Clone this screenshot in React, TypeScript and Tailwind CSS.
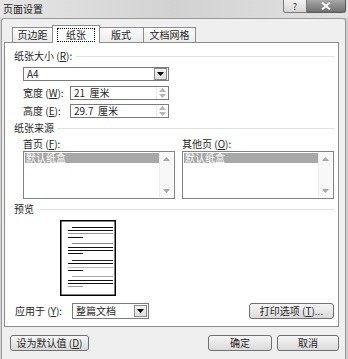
import React from "react";

const Tri = ({ up, className }: { up?: boolean; className?: string }) => (
  <svg width="7" height="4" viewBox="0 0 7 4" className={className}>
    <path d={up ? "M0 4L3.5 0L7 4Z" : "M0 0L7 0L3.5 4Z"} fill="currentColor" />
  </svg>
);

const Section = ({ children, className = "" }: { children: React.ReactNode; className?: string }) => (
  <div className={`flex items-center h-[10px] ${className}`}>
    <span className="whitespace-nowrap">{children}</span>
    <div className="flex-1 ml-[4px] h-px bg-[#e0e0e0]" />
  </div>
);

const Key = ({ k }: { k: string }) => (
  <>
    {" "}(<span className="underline underline-offset-1">{k}</span>)
  </>
);

const DropBtn = () => (
  <div className="w-[13px] h-[12px] mr-px border border-[#8a8a8a] bg-linear-to-b from-[#f4f4f4] to-[#dedede] flex items-center justify-center text-black">
    <Tri />
  </div>
);

const Spin = ({ label, k, value }: { label: string; k: string; value: string }) => (
  <div className="flex items-center ml-[9px] h-[14px]">
    <span className="w-[47px] whitespace-nowrap">
      {label}
      <Key k={k} />:
    </span>
    <div className="w-[99px] h-full border border-[#7a7a7a] bg-white flex items-center">
      <span className="flex-1 pl-[3px] whitespace-pre">{value}</span>
      <div className="w-[12px] h-full flex flex-col items-center justify-center gap-[2px] text-[#b4b4b4] border-l border-[#ececec]">
        <Tri up />
        <Tri />
      </div>
    </div>
  </div>
);

const ListBox = () => (
  <div className="w-[152px] h-[48px] border border-[#828282] bg-white flex p-px">
    <div className="flex-1">
      <div className="h-[10px] bg-[#a8a8a8] text-white pl-px leading-[10px]">默认纸盒</div>
    </div>
    <div className="w-[14px] flex flex-col justify-between items-center py-[4px] bg-[#f8f8f8] border-l border-[#ececec] text-[#a8a8a8]">
      <Tri up />
      <Tri />
    </div>
  </div>
);

const Button = ({ children, className = "" }: { children: React.ReactNode; className?: string }) => (
  <div
    className={`h-[16px] border border-[#707070] rounded-[3px] bg-linear-to-b from-[#f6f6f6] to-[#dadada] flex items-center justify-center whitespace-nowrap ${className}`}
  >
    {children}
  </div>
);

// preview page lines: y, x1, x2, colour
const lines: [number, number, number, string][] = [
  [7.5, 12, 53, "#111"],
  [10.5, 8, 53, "#111"],
  [13.5, 8, 53, "#999"],
  [17.5, 8, 23, "#111"],
  [23.5, 12, 53, "#888"],
  [27.5, 8, 53, "#111"],
  [30.5, 8, 53, "#111"],
  [33.5, 8, 23, "#111"],
  [40.5, 12, 53, "#222"],
  [43.5, 8, 53, "#111"],
  [47.5, 8, 53, "#bbb"],
  [50.5, 8, 23, "#111"],
  [56.5, 12, 53, "#aaa"],
  [60.5, 8, 53, "#111"],
  [63.5, 8, 53, "#111"],
  [66.5, 8, 23, "#999"],
];

const Tab = ({ label, w, active }: { label: string; w: string; active?: boolean }) =>
  active ? (
    <div className={`${w} h-[18px] -ml-px -mr-px relative z-10 -mb-px bg-white border-t border-x border-[#8c8c8c] flex items-center justify-center`}>
      <span className="border border-dotted border-black px-[8px] h-[14px] leading-[12px] mt-[1px]">{label}</span>
    </div>
  ) : (
    <div className={`${w} h-[15px] bg-linear-to-b from-[#fbfbfb] to-[#ececec] border-t border-x border-[#8c8c8c] -ml-px first:ml-0 flex items-center justify-center`}>
      {label}
    </div>
  );

export default function App() {
  return (
    <div className="w-[348px] h-[359px] flex flex-col overflow-hidden bg-linear-to-r from-[#d4d4d4] via-[#c6c6c6] to-[#cecece] text-[10px] leading-[10px] text-[#262626] font-['Noto_Sans_CJK_SC',sans-serif]">
      {/* title bar */}
      <div className="h-[18px] shrink-0 flex items-start bg-linear-to-r from-[#e6e6e6] via-[#d2d2d2] to-[#e2e2e2]">
        <span className="ml-[3px] mt-[4px] text-[#222]">页面设置</span>
        <div className="ml-auto mr-[2px] flex">
          <div className="w-[24px] h-[13px] rounded-bl-[3px] border border-t-0 border-[#7a7a7a] bg-linear-to-b from-[#f2f2f2] to-[#d6d6d6] flex items-center justify-center text-[9px] leading-[9px] pt-px text-[#333]">
            ?
          </div>
          <div className="w-[39px] h-[13px] rounded-br-[3px] border border-t-0 border-l-0 border-[#5a5a5a] bg-linear-to-b from-[#a8a8a8] to-[#707070] flex items-center justify-center">
            <svg width="10" height="8" viewBox="0 0 10 8">
              <path d="M1 0.5L9 7.5M9 0.5L1 7.5" stroke="white" strokeWidth="2" />
            </svg>
          </div>
        </div>
      </div>

      {/* dialog body */}
      <div className="flex-1 ml-px mr-[2px] border border-b-0 border-[#9a9a9a] rounded-t-[3px] bg-[#efefef] pl-[2px] pr-[6px] flex flex-col">
        <div className="h-[23px] flex items-end pl-[8px]">
          <Tab label="页边距" w="w-[41px]" />
          <Tab label="纸张" w="w-[48px]" active />
          <Tab label="版式" w="w-[46px]" />
          <Tab label="文档网格" w="w-[53px]" />
        </div>

        <div className="h-[285px] border border-[#8c8c8c] bg-white pl-[9px] pr-[4px] flex flex-col">
          <Section className="mt-[8px]">
            纸张大小<Key k="R" />:
          </Section>
          <div className="mt-[6px] ml-[9px] w-[146px] h-[14px] border border-[#7a7a7a] bg-white flex items-center">
            <span className="flex-1 pl-[3px]">A4</span>
            <DropBtn />
          </div>
          <div className="mt-[5px]">
            <Spin label="宽度" k="W" value="21  厘米" />
          </div>
          <div className="mt-[4px]">
            <Spin label="高度" k="E" value="29.7  厘米" />
          </div>

          <Section className="mt-[5px]">纸张来源</Section>
          <div className="mt-[6px] ml-[9px] grid grid-cols-[152px_152px] gap-x-[7px]">
            <span className="h-[10px]">
              首页<Key k="F" />:
            </span>
            <span className="h-[10px]">
              其他页<Key k="O" />:
            </span>
            <div className="mt-[2px]">
              <ListBox />
            </div>
            <div className="mt-[2px]">
              <ListBox />
            </div>
          </div>

          <Section className="mt-[5px]">预览</Section>
          <div className="mt-[6px] ml-[46px]">
            <svg width="56" height="76" viewBox="0 0 56 76">
              <rect x="0.75" y="0.75" width="54.5" height="74.5" fill="white" stroke="black" strokeWidth="1.5" />
              {lines.map(([y, x1, x2, c], i) => (
                <line key={i} x1={x1} x2={x2} y1={y} y2={y} stroke={c} strokeWidth="1" />
              ))}
            </svg>
          </div>

          <div className="mt-[7px] h-[16px] flex items-center">
            <span className="w-[58px] pl-px whitespace-nowrap">
              应用于<Key k="Y" />:
            </span>
            <div className="w-[77px] h-full border border-[#7a7a7a] bg-white flex items-center">
              <span className="flex-1 pl-[3px]">整篇文档</span>
              <DropBtn />
            </div>
            <Button className="ml-auto w-[85px]">
              打印选项<Key k="T" />...
            </Button>
          </div>
        </div>

        <div className="mt-[8px] flex items-center">
          <Button className="ml-[6px] w-[79px]">
            设为默认值<Key k="D" />
          </Button>
          <Button className="ml-auto w-[64px]">确定</Button>
          <Button className="ml-[5px] w-[62px]">取消</Button>
        </div>
      </div>
    </div>
  );
}
